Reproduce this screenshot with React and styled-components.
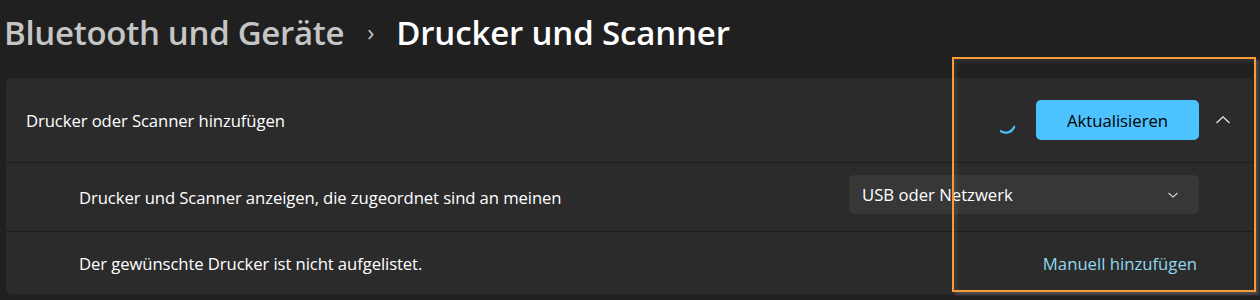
import React from "react";
import styled, { createGlobalStyle } from "styled-components";

const Global = createGlobalStyle`
  html, body { margin: 0; padding: 0; background: #202020; }
  body { font-family: "Open Sans", "Noto Sans", sans-serif; color: #fff; }
`;

const Page = styled.div`
  position: relative;
  width: 1260px;
  height: 300px;
  overflow: hidden;
  background: #202020;
`;

const Title = styled.h1`
  margin: 0;
  padding: 11px 0 0 4px;
  height: 78px;
  box-sizing: border-box;
  display: flex;
  align-items: baseline;
  font-size: 33px;
  font-weight: 600;
  line-height: 44px;
  letter-spacing: -0.3px;
`;

const Crumb = styled.span`
  color: ${(p) => (p.$current ? "#ffffff" : "#c5c5c5")};
  letter-spacing: ${(p) => (p.$current ? "-0.15px" : "-0.3px")};
`;

const Sep = styled.span`
  color: #c5c5c5;
  font-weight: 400;
  font-size: 24px;
  margin: 0 22px 0 23px;
  position: relative;
  top: -4px;
`;

const Card = styled.div`
  margin: 0 7px 0 6px;
  background: #2b2b2b;
  border-radius: 5px;
  overflow: hidden;
`;

const Row = styled.div`
  display: flex;
  align-items: center;
  height: ${(p) => p.$h}px;
  padding: 0 ${(p) => p.$pr || 54}px 0 ${(p) => p.$pl || 73}px;
  border-top: ${(p) => (p.$first ? "none" : "1px solid #1c1c1c")};
  box-sizing: border-box;
`;

const Label = styled.div`
  flex: 1;
  font-size: 16.7px;
  color: #ffffff;
  letter-spacing: -0.1px;
`;

const Spinner = styled.svg`
  width: 24px;
  height: 24px;
  margin-right: 18px;
  margin-top: 6px;
`;

const PrimaryButton = styled.button`
  width: 163px;
  height: 40px;
  border: none;
  border-radius: 5px;
  background: #4cc2ff;
  color: #000;
  font-family: inherit;
  font-size: 16.7px;
  padding: 0;
`;

const ExpandButton = styled.div`
  width: 48px;
  display: flex;
  justify-content: center;
  margin-right: -6px;
`;

const Select = styled.div`
  width: 350px;
  height: 39px;
  box-sizing: border-box;
  background: #373737;
  border-radius: 5px;
  display: flex;
  align-items: center;
  padding: 0 20px 0 13px;
  font-size: 16.7px;
  color: #fff;
  margin-top: -5px;
`;

const SelectText = styled.span`
  flex: 1;
`;

const Link = styled.a`
  color: #92d8ee;
  font-size: 16.7px;
  text-decoration: none;
  margin-right: 2px;
`;

const Highlight = styled.div`
  position: absolute;
  left: 952px;
  top: 57px;
  width: 304px;
  height: 235px;
  box-sizing: border-box;
  border: 2px solid #f39c3c;
  box-shadow: inset 3px 3px 5px rgba(255, 255, 255, 0.09),
    3px 3px 2px rgba(90, 90, 90, 0.7);
  pointer-events: none;
`;

export default function App() {
  return (
    <Page>
      <Global />
      <Title>
        <Crumb>Bluetooth und Geräte</Crumb>
        <Sep>›</Sep>
        <Crumb $current>Drucker und Scanner</Crumb>
      </Title>
      <Card>
        <Row $first $h={84} $pl={20} $pr={12}>
          <Label>Drucker oder Scanner hinzufügen</Label>
          <Spinner viewBox="0 0 24 24">
            <path
              d="M 20.2 15.8 A 9 9 0 0 1 6.8 20.2"
              fill="none"
              stroke="#4cc2ff"
              strokeWidth="2.2"
              strokeLinecap="round"
            />
          </Spinner>
          <PrimaryButton>Aktualisieren</PrimaryButton>
          <ExpandButton>
            <svg width="16" height="10" viewBox="0 0 16 10">
              <path d="M1.5 8 L8 1.8 L14.5 8" fill="none" stroke="#e8e8e8" strokeWidth="1.3" />
            </svg>
          </ExpandButton>
        </Row>
        <Row $h={69}>
          <Label>Drucker und Scanner anzeigen, die zugeordnet sind an meinen</Label>
          <Select>
            <SelectText>USB oder Netzwerk</SelectText>
            <svg width="12" height="8" viewBox="0 0 12 8">
              <path d="M1.5 2 L6 6 L10.5 2" fill="none" stroke="#cfcfcf" strokeWidth="1.2" />
            </svg>
          </Select>
        </Row>
        <Row $h={63}>
          <Label>Der gewünschte Drucker ist nicht aufgelistet.</Label>
          <Link href="#">Manuell hinzufügen</Link>
        </Row>
      </Card>
      <Highlight />
    </Page>
  );
}
